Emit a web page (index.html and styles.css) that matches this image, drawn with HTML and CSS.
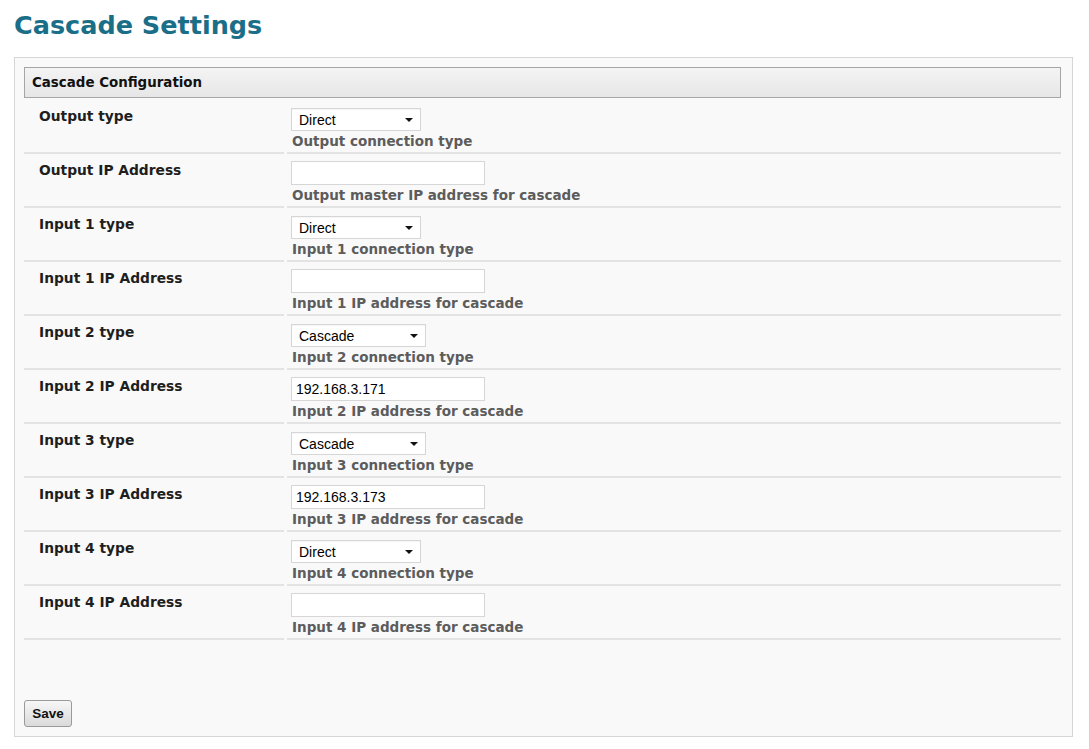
FILE: index.html
```html
<!DOCTYPE html>
<html lang="en">
<head>
<meta charset="utf-8">
<title>Cascade Settings</title>
<link rel="stylesheet" href="styles.css">
</head>
<body>
<h1 class="page-title">Cascade Settings</h1>
<form class="panel">
  <div class="panel-header">Cascade Configuration</div>
  <div class="rows">
    <div class="label">Output type</div>
    <div class="value">
      <span class="select w130"><select><option>Direct</option><option>Cascade</option></select></span>
      <div class="hint">Output connection type</div>
    </div>

    <div class="label">Output IP Address</div>
    <div class="value">
      <input class="text" type="text" value="">
      <div class="hint">Output master IP address for cascade</div>
    </div>

    <div class="label">Input 1 type</div>
    <div class="value">
      <span class="select w130"><select><option>Direct</option><option>Cascade</option></select></span>
      <div class="hint">Input 1 connection type</div>
    </div>

    <div class="label">Input 1 IP Address</div>
    <div class="value">
      <input class="text" type="text" value="">
      <div class="hint">Input 1 IP address for cascade</div>
    </div>

    <div class="label">Input 2 type</div>
    <div class="value">
      <span class="select w135"><select><option>Cascade</option><option>Direct</option></select></span>
      <div class="hint">Input 2 connection type</div>
    </div>

    <div class="label">Input 2 IP Address</div>
    <div class="value">
      <input class="text" type="text" value="192.168.3.171">
      <div class="hint">Input 2 IP address for cascade</div>
    </div>

    <div class="label">Input 3 type</div>
    <div class="value">
      <span class="select w135"><select><option>Cascade</option><option>Direct</option></select></span>
      <div class="hint">Input 3 connection type</div>
    </div>

    <div class="label">Input 3 IP Address</div>
    <div class="value">
      <input class="text" type="text" value="192.168.3.173">
      <div class="hint">Input 3 IP address for cascade</div>
    </div>

    <div class="label">Input 4 type</div>
    <div class="value">
      <span class="select w130"><select><option>Direct</option><option>Cascade</option></select></span>
      <div class="hint">Input 4 connection type</div>
    </div>

    <div class="label">Input 4 IP Address</div>
    <div class="value">
      <input class="text" type="text" value="">
      <div class="hint">Input 4 IP address for cascade</div>
    </div>
  </div>
  <button class="btn" type="button">Save</button>
</form>
</body>
</html>
```

FILE: styles.css
```css
html, body {
  margin: 0;
  padding: 0;
  background: #ffffff;
}

body {
  padding: 0 16px 0 14px;
  font-family: "DejaVu Sans", Verdana, sans-serif;
  color: #222;
}

.page-title {
  margin: 10px 0 0 0;
  font-size: 25.5px;
  line-height: 30px;
  font-weight: bold;
  color: #1a6e87;
}

.panel {
  margin-top: 17px;
  border: 1px solid #d6d6d6;
  background: #f9f9f9;
  padding: 9px 11px 9px 9px;
  display: flex;
  flex-direction: column;
  align-items: flex-start;
}

.panel-header {
  align-self: stretch;
  height: 29px;
  line-height: 29px;
  border: 1px solid #a6a6a6;
  background: linear-gradient(#f4f4f4, #e6e6e6);
  padding-left: 7px;
  font-size: 13.4px;
  font-weight: bold;
  color: #111;
}

.rows {
  align-self: stretch;
  margin-top: 2px;
  display: grid;
  grid-template-columns: 260px 1fr;
  column-gap: 3px;
}

.label,
.value {
  border-bottom: 2px solid #e3e3e3;
  box-sizing: content-box;
}

.label {
  padding: 8px 0 0 15px;
  height: 44px;
  font-size: 13.8px;
  line-height: 16px;
  font-weight: bold;
  color: #1e1e1e;
}

.value {
  padding: 7px 0 0 4px;
  height: 45px;
}

.select {
  position: relative;
  display: block;
  margin-top: 1px;
  height: 23px;
}

.select.w130 { width: 130px; }
.select.w135 { width: 135px; }

.select select {
  -webkit-appearance: none;
  appearance: none;
  display: block;
  width: 100%;
  height: 23px;
  margin: 0;
  padding: 0 0 0 7px;
  border: 1px solid #d6d6d6;
  border-radius: 0;
  background: #ffffff;
  font-family: "Liberation Sans", Arial, sans-serif;
  font-size: 14px;
  color: #000;
  box-shadow: inset 0 1px 1px rgba(0,0,0,0.04);
}

.select::after {
  content: "";
  position: absolute;
  right: 8px;
  top: 10px;
  border-left: 4px solid transparent;
  border-right: 4px solid transparent;
  border-top: 4px solid #111;
  pointer-events: none;
}

.text {
  display: block;
  box-sizing: border-box;
  width: 194px;
  height: 24px;
  margin: 0;
  padding: 0 0 0 4px;
  border: 1px solid #d6d6d6;
  background: #ffffff;
  font-family: "Liberation Sans", Arial, sans-serif;
  font-size: 14px;
  color: #000;
  outline: none;
}

.hint {
  margin-top: 2px;
  font-size: 13.5px;
  line-height: 16px;
  font-weight: bold;
  color: #5c5c5c;
  padding-left: 1px;
}

.btn {
  margin-top: 60px;
  width: 48px;
  height: 27px;
  padding: 0;
  border: 1px solid #9a9a9a;
  border-radius: 3px;
  background: linear-gradient(#f7f7f7, #dadada);
  font-family: "Liberation Sans", Arial, sans-serif;
  font-size: 13.5px;
  font-weight: bold;
  color: #111;
}
```
